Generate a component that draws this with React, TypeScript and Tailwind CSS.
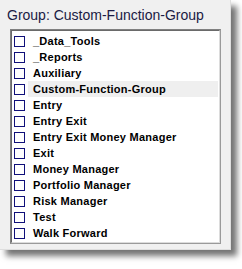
import React from 'react';

const groups = [
  '_Data_Tools',
  '_Reports',
  'Auxiliary',
  'Custom-Function-Group',
  'Entry',
  'Entry Exit',
  'Entry Exit Money Manager',
  'Exit',
  'Money Manager',
  'Portfolio Manager',
  'Risk Manager',
  'Test',
  'Walk Forward',
];

const selected = 'Custom-Function-Group';

export default function App() {
  return (
    <div className="w-[242px] h-[269px] bg-white" style={{ fontFamily: '"Liberation Sans", Arial, sans-serif' }}>
      <div className="w-[231px] h-[250px] bg-[#f0f0f0] border-r border-b border-[#dedede] shadow-[6px_6px_6px_rgba(0,0,0,0.55)] px-[10px] pt-[6px]">
        {/* Title */}
        <div className="text-[14px] leading-[18px] text-[#1a1a44] -ml-[3px]">
          Group: Custom-Function-Group
        </div>

        {/* List box */}
        <div className="mt-[5px] w-[211px] h-[215px] border border-[#808080] border-r-[#9a9a9a] border-b-[#9a9a9a]">
          <div className="h-full bg-white border border-[#6a6a6a] border-r-[#dcdcdc] border-b-[#dcdcdc] pt-[2px]">
            {groups.map((g) => (
              <div key={g} className="h-[16px] flex items-center">
                <span className="ml-[2px] w-[11px] h-[11px] border border-[#10107a] bg-white shrink-0" />
                <span
                  className={`ml-[3px] mr-[1px] flex-1 h-[16px] pl-[5px] flex items-center text-[11px] tracking-[0.25px] font-bold text-black ${
                    g === selected ? 'bg-[#efefef]' : ''
                  }`}
                >
                  {g}
                </span>
              </div>
            ))}
          </div>
        </div>
      </div>
    </div>
  );
}
